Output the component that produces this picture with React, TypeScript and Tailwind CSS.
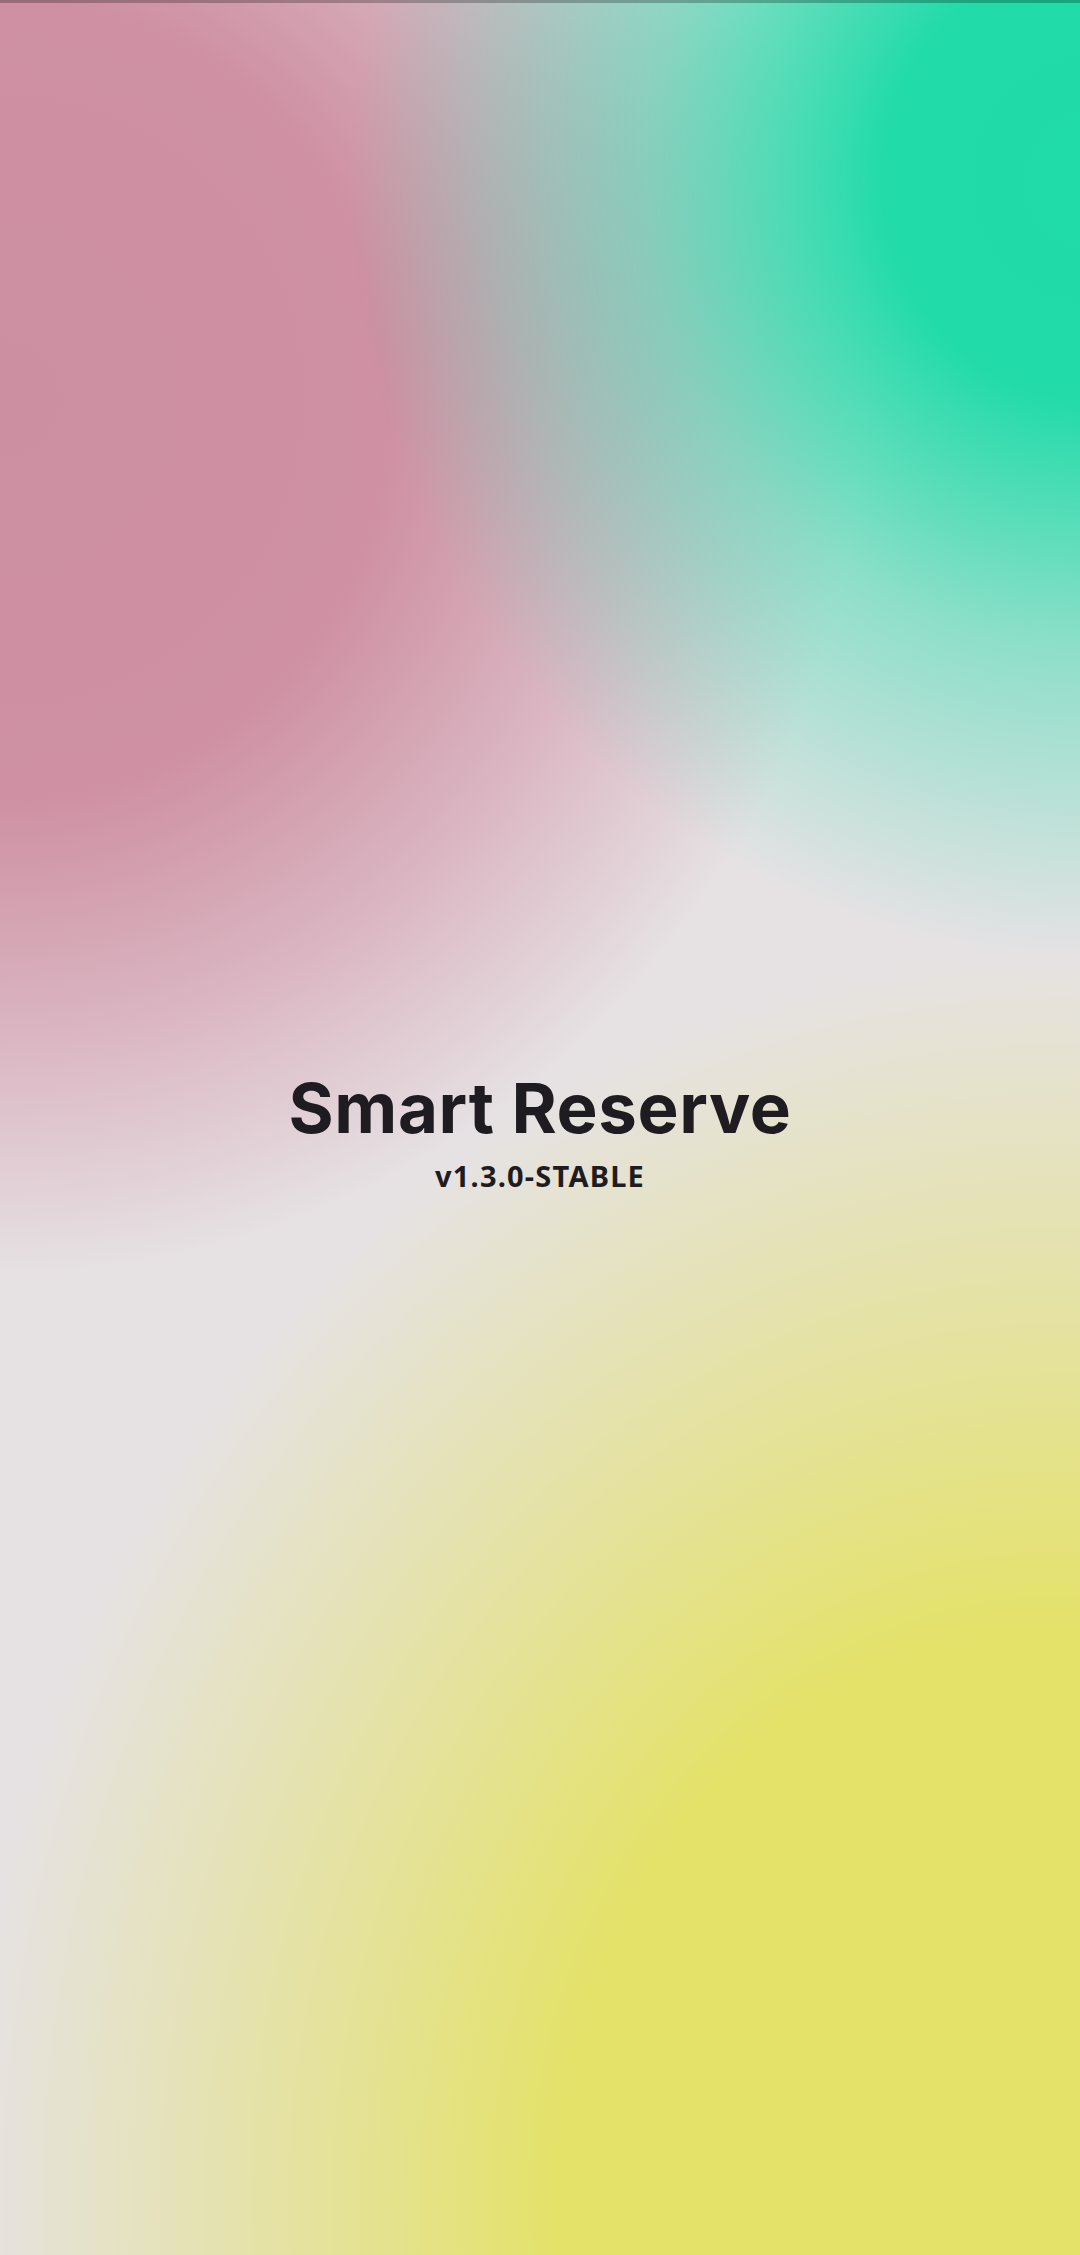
import React from "react";

export default function App() {
  return (
    <div className="relative flex h-[2255px] w-[1080px] flex-col overflow-hidden [background:radial-gradient(ellipse_1100px_1250px_at_1060px_2200px,#e4e268_0%,#e4e268_45%,rgba(228,226,104,0.5)_72%,rgba(228,226,104,0)_100%),radial-gradient(ellipse_740px_780px_at_1090px_180px,#1fdca8_0%,#22dba9_28%,rgba(34,219,169,0.45)_60%,rgba(34,219,169,0)_100%),radial-gradient(ellipse_860px_880px_at_0px_400px,#cc8ea1_0%,#ce90a2_45%,rgba(210,150,170,0.55)_74%,rgba(214,160,178,0)_100%),#e6e2e4]">
      <div className="h-[3px] w-full shrink-0 bg-black/25" />
      <div className="flex flex-1 flex-col items-center justify-center pt-[4px]">
        <h1 className="font-['Inter',sans-serif] text-[69px] font-bold leading-[80px] tracking-[0.6px] text-[#1e1c21]">
          Smart Reserve
        </h1>
        <p className="mt-[10px] font-['Noto_Sans',sans-serif] text-[29px] font-bold leading-[36px] tracking-[1.2px] text-[#1e1c21]">
          v1.3.0-STABLE
        </p>
      </div>
    </div>
  );
}
